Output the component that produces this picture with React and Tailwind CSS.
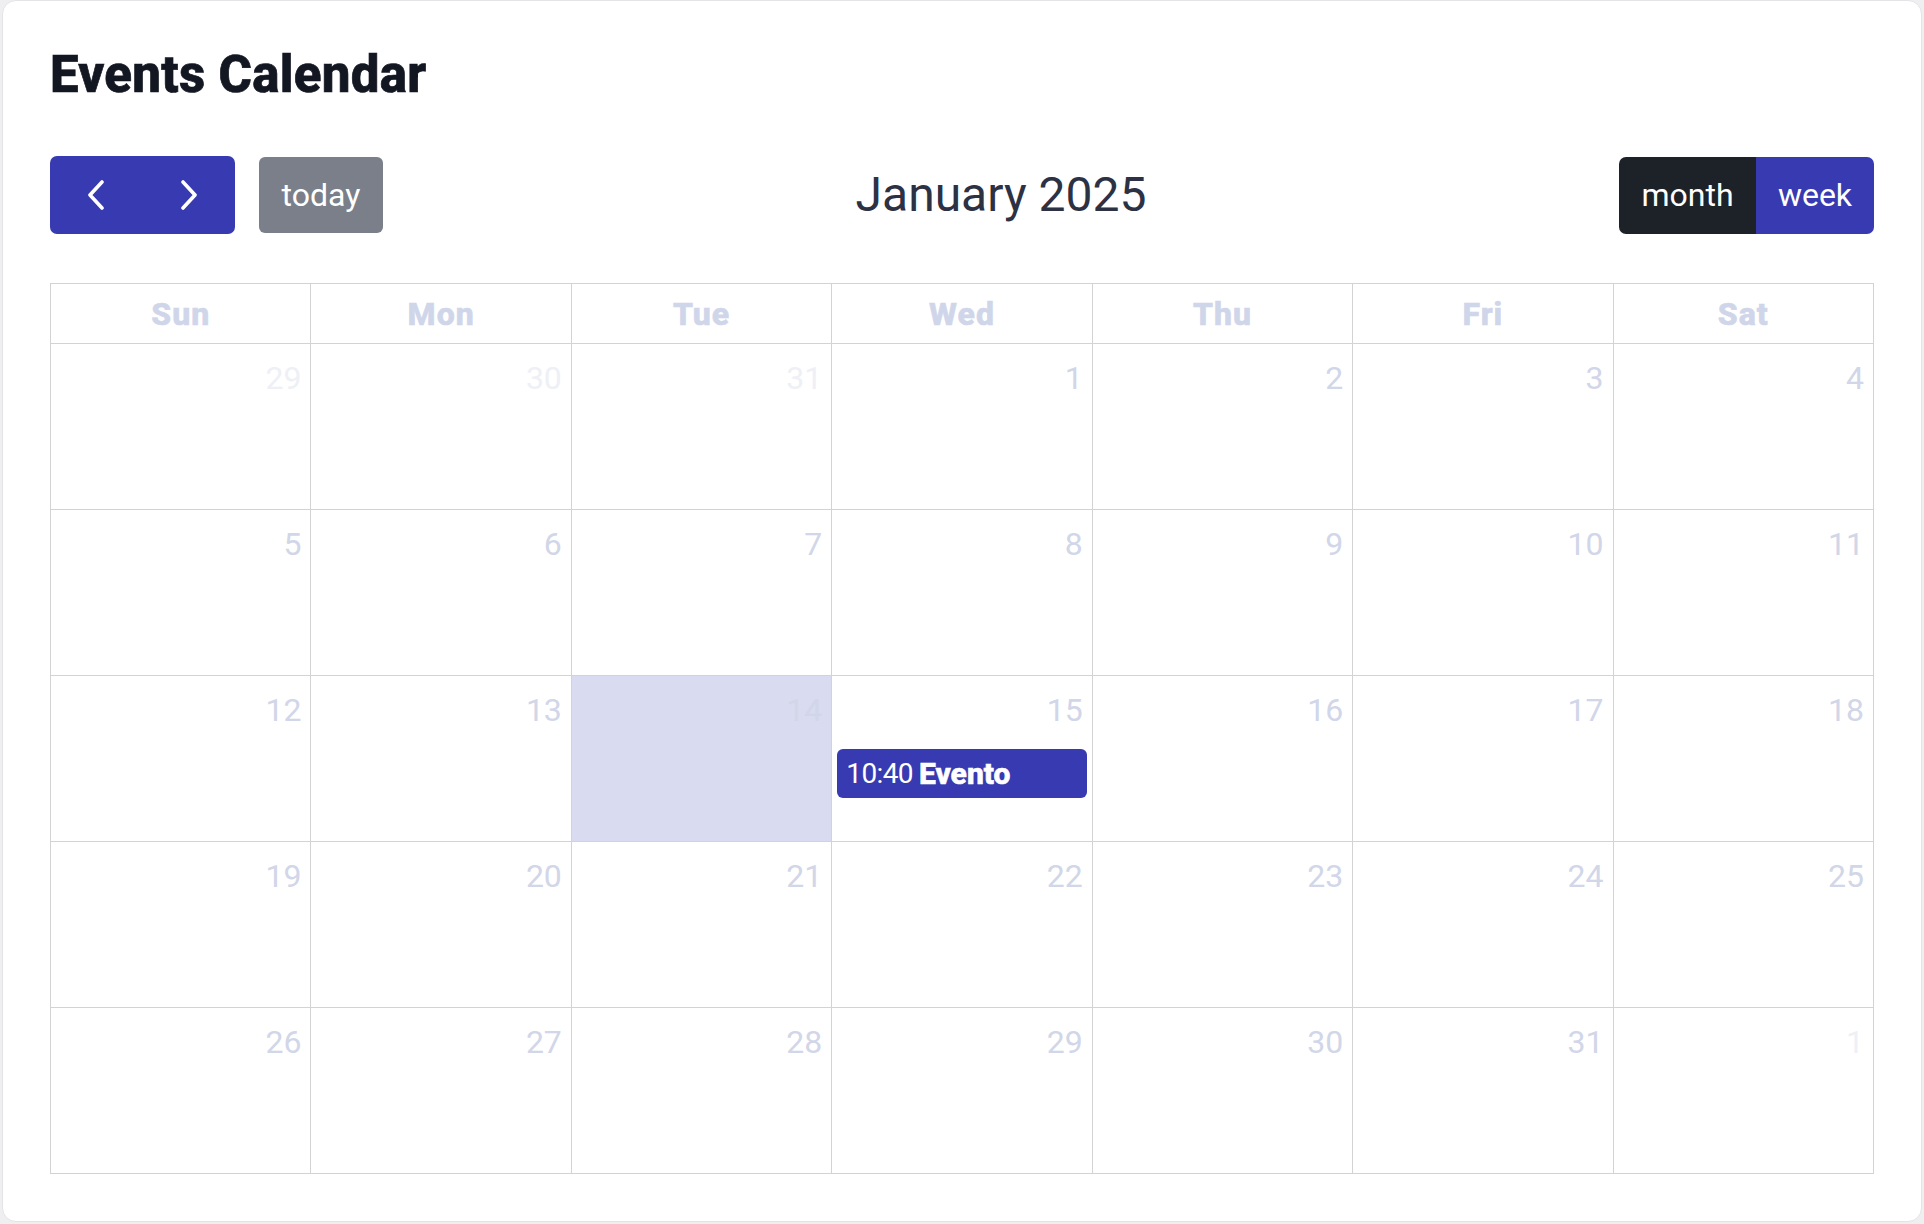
import React from "react";

const DAYS = ["Sun", "Mon", "Tue", "Wed", "Thu", "Fri", "Sat"];

// each entry: [day, isOtherMonth]
const WEEKS = [
  [[29, true], [30, true], [31, true], [1], [2], [3], [4]],
  [[5], [6], [7], [8], [9], [10], [11]],
  [[12], [13], [14], [15], [16], [17], [18]],
  [[19], [20], [21], [22], [23], [24], [25]],
  [[26], [27], [28], [29], [30], [31], [1, true]],
];

function ChevronLeft() {
  return (
    <svg width="18" height="30" viewBox="0 0 18 30" fill="none">
      <path
        d="M15 2 L3 15 L15 28"
        stroke="white"
        strokeWidth="3.6"
        strokeLinecap="round"
        strokeLinejoin="round"
      />
    </svg>
  );
}

function ChevronRight() {
  return (
    <svg width="18" height="30" viewBox="0 0 18 30" fill="none">
      <path
        d="M3 2 L15 15 L3 28"
        stroke="white"
        strokeWidth="3.6"
        strokeLinecap="round"
        strokeLinejoin="round"
      />
    </svg>
  );
}

function DayCell({ day, other, today, event }) {
  return (
    <div
      className={`h-[166px] border-r border-b border-[#d3d3d3] flex flex-col ${
        today ? "bg-[#d9dbf0]" : "bg-white"
      }`}
    >
      <div
        className={`text-right pt-[10px] pr-[9px] text-[32px] leading-[48px] ${
          other ? "text-[#eef0f6]" : "text-[#d1d6e8]"
        }`}
      >
        {day}
      </div>
      {event && (
        <div className="mt-[15px] mx-[5px] h-[49px] rounded-[6px] bg-[#373ab0] text-white flex items-center px-[9px] leading-none">
          <span className="text-[28px] tracking-[-0.6px]">10:40</span>
          <span className="text-[30px] font-extrabold ml-[6px] [-webkit-text-stroke:0.6px_white]">
            Evento
          </span>
        </div>
      )}
    </div>
  );
}

export default function App() {
  return (
    <div
      className="min-h-screen bg-[#efeff2] px-[2px] pb-[2px]"
      style={{ fontFamily: "Roboto, 'Liberation Sans', sans-serif" }}
    >
      <div className="h-[1222px] bg-white rounded-[14px] border border-[#e4e4e7] px-[47px] pt-[49px]">
        <h1 className="text-[51px] leading-[50px] font-extrabold tracking-[0.3px] text-[#131722] [-webkit-text-stroke:0.7px_#131722]">
          Events Calendar
        </h1>

        {/* toolbar */}
        <div className="mt-[56px] flex items-center justify-between">
          <div className="flex items-center gap-[24px]">
            <div className="flex h-[78px] w-[185px] rounded-[7px] bg-[#373ab0] overflow-hidden">
              <button className="flex-1 flex items-center justify-center">
                <ChevronLeft />
              </button>
              <button className="flex-1 flex items-center justify-center">
                <ChevronRight />
              </button>
            </div>
            <button className="h-[76px] w-[124px] rounded-[6px] bg-[#7b7f8a] text-white text-[32px]">
              today
            </button>
          </div>

          <h2 className="text-[48px] leading-none text-[#2c3244]">
            January 2025
          </h2>

          <div className="flex h-[77px] rounded-[7px] overflow-hidden text-white text-[32px]">
            <button className="w-[137px] bg-[#1d2229]">month</button>
            <button className="w-[118px] bg-[#373ab0]">week</button>
          </div>
        </div>

        {/* calendar grid */}
        <div className="mt-[49px] border-t border-l border-[#d3d3d3]">
          <div className="grid grid-cols-7">
            {DAYS.map((d) => (
              <div
                key={d}
                className="h-[60px] border-r border-b border-[#d3d3d3] flex items-center justify-center text-[32px] font-extrabold tracking-[1px] text-[#d0d6ea] [-webkit-text-stroke:0.6px_#d0d6ea]"
              >
                {d}
              </div>
            ))}
          </div>
          {WEEKS.map((week, wi) => (
            <div key={wi} className="grid grid-cols-7">
              {week.map(([day, other], di) => (
                <DayCell
                  key={di}
                  day={day}
                  other={other}
                  today={wi === 2 && day === 14}
                  event={wi === 2 && day === 15}
                />
              ))}
            </div>
          ))}
        </div>
      </div>
    </div>
  );
}
